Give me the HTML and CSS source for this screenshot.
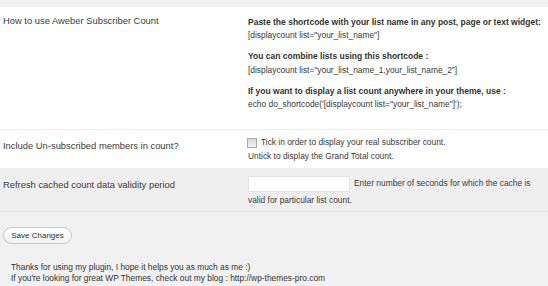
FILE: index.html
```html
<!DOCTYPE html>
<html>
<head>
<meta charset="utf-8">
<link rel="stylesheet" href="styles.css">
</head>
<body>
<div class="page">
  <div class="form">
    <div class="row row-how">
      <div class="label">How to use Aweber Subscriber Count</div>
      <div class="field">
        <p><strong>Paste the shortcode with your list name in any post, page or text widget:</strong><br>[displaycount list="your_list_name"]</p>
        <p><strong>You can combine lists using this shortcode :</strong><br>[displaycount list="your_list_name_1,your_list_name_2"]</p>
        <p><strong>If you want to display a list count anywhere in your theme, use :</strong><br>echo do_shortcode('[displaycount list="your_list_name"]');</p>
      </div>
    </div>
    <div class="row row-unsub">
      <div class="label">Include Un-subscribed members in count?</div>
      <div class="field">
        <div class="check-line"><input type="checkbox" class="check"><span>Tick in order to display your real subscriber count.</span></div>
        <div class="line">Untick to display the Grand Total count.</div>
      </div>
    </div>
    <div class="row row-cache">
      <div class="label">Refresh cached count data validity period</div>
      <div class="field">
        <div class="input-line"><input type="text" class="text-input"><span>Enter number of seconds for which the cache is</span></div>
        <div class="line">valid for particular list count.</div>
      </div>
    </div>
  </div>
  <div class="actions">
    <button class="button">Save Changes</button>
  </div>
  <div class="footer">
    <div>Thanks for using my plugin, I hope it helps you as much as me :)</div>
    <div>If you're looking for great WP Themes, check out my blog : http://wp-themes-pro.com</div>
  </div>
</div>
</body>
</html>
```

FILE: styles.css
```css
html, body {
  margin: 0;
  padding: 0;
  background: #f1f1f1;
}

body {
  font-family: "Liberation Sans", Arial, sans-serif;
  font-size: 8.4px;
  color: #333;
}

.page {
  padding-top: 7px;
}

.row {
  display: flex;
  background: #fff;
}

.label {
  width: 248px;
  padding-left: 3px;
  box-sizing: border-box;
  flex: none;
  color: #3a3a3a;
  font-size: 9.4px;
  line-height: 13px;
}

.field {
  flex: 1;
  line-height: 13.4px;
  color: #3a3a3a;
  white-space: nowrap;
}

.field strong {
  color: #333;
  font-size: 8.5px;
}

.row-how {
  height: 123px;
  border-bottom: 1px solid #f0f0f0;
  box-sizing: border-box;
}

.row-how .label {
  padding-top: 6.5px;
}

.row-how .field {
  padding-top: 8.8px;
}

.row-how p {
  margin: 0 0 7.6px;
}

.row-unsub {
  height: 38px;
}

.row-unsub .label {
  padding-top: 8.5px;
}

.row-unsub .field {
  padding-top: 5.5px;
}

.check-line {
  display: flex;
  align-items: center;
  height: 13.4px;
}

.check {
  appearance: none;
  -webkit-appearance: none;
  width: 10px;
  height: 10px;
  margin: 2px 4px 0 -1px;
  box-sizing: border-box;
  border: 1px solid #a9a9a9;
  background: linear-gradient(#d8d8d8, #f4f4f4);
  flex: none;
}

.row-unsub .line {
  margin-top: 1px;
}

.row-cache {
  height: 44px;
  background: #efefef;
  border-bottom: 1px solid #e9e9e9;
  box-sizing: border-box;
}

.row-cache .label {
  padding-top: 9.5px;
}

.row-cache .field {
  padding-top: 7.5px;
}

.input-line {
  display: flex;
  align-items: center;
  gap: 4px;
}

.text-input {
  width: 102px;
  height: 16px;
  box-sizing: border-box;
  margin: 0;
  padding: 0;
  border: 1px solid #e2e2e2;
  background: #fff;
  border-radius: 1px;
}

.row-cache .line {
  margin-top: 2px;
}

.actions {
  padding: 15px 0 0 3px;
}

.button {
  display: block;
  width: 69px;
  height: 17px;
  padding: 0;
  margin: 0;
  border: 1px solid #c8c8c8;
  border-radius: 9px;
  background: linear-gradient(#fefefe, #f3f3f3);
  font-family: "Liberation Sans", Arial, sans-serif;
  font-size: 8px;
  color: #333;
  line-height: 15px;
}

.footer {
  padding: 18px 0 0 11px;
  line-height: 11px;
  color: #333;
  font-size: 8.4px;
}
```
